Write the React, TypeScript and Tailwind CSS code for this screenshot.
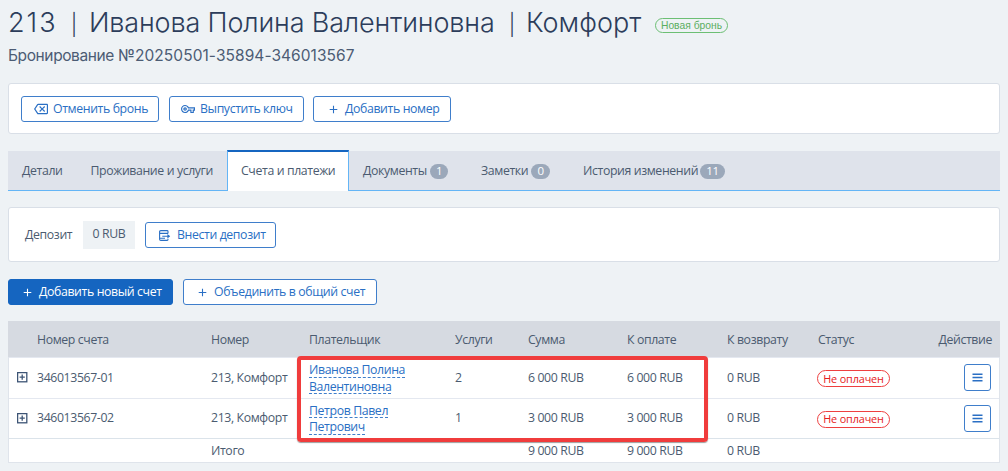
import React from "react";
import { MdAdd, MdOutlineBackspace, MdOutlineVpnKey } from "react-icons/md";

type Invoice = { id: string; payer: [string, string]; services: string; sum: string };

const invoices: Invoice[] = [
  { id: "346013567-01", payer: ["Иванова Полина", "Валентиновна"], services: "2", sum: "6 000 RUB" },
  { id: "346013567-02", payer: ["Петров Павел", "Петрович"], services: "1", sum: "3 000 RUB" },
];

const rowGrid = "grid grid-cols-[28px_174px_98px_146px_73px_99px_100px_91px_1fr] items-center";

function Button({ icon, children, className = "" }: { icon: React.ReactNode; children: React.ReactNode; className?: string }) {
  return (
    <button className={`flex h-[26px] shrink-0 items-center rounded-[3px] border border-[#3f7ecb] bg-white pt-px pl-[12px] text-[#2a6fc4] whitespace-nowrap ${className}`}>
      {icon}
      {children}
    </button>
  );
}

function Count({ children, className = "" }: { children: React.ReactNode; className?: string }) {
  return (
    <span className={`flex h-[15px] items-center justify-center rounded-full bg-[#9ba8ba] text-[11.5px] font-medium text-white ${className}`}>
      {children}
    </span>
  );
}

function DepositIcon() {
  return (
    <svg className="mr-[6px] h-[13px] w-[13px]" viewBox="0 0 13 13" fill="none" stroke="currentColor" strokeWidth="1.1">
      <path d="M10 4.6V2.4Q10 1.6 9.2 1.6H2.8Q1.6 1.6 1.6 2.8V10.2Q1.6 11.4 2.8 11.4H9.2Q10 11.4 10 10.6V9.8M1.6 4.4H10M4.3 7.3H11.2M1.6 9.2H7" />
      <path d="M9.4 5L12.2 7.3L9.4 9.6Z" fill="currentColor" stroke="none" />
    </svg>
  );
}

function ExpandIcon() {
  return (
    <svg className="ml-[8px] h-[11px] w-[11px] text-[#3d5475]" viewBox="0 0 11 11" fill="none" stroke="currentColor" strokeWidth="1.3">
      <rect x="0.6" y="0.6" width="9.2" height="9.2" />
      <path d="M5.2 2.6V7.8M2.6 5.2H7.8" />
    </svg>
  );
}

function MenuIcon() {
  return (
    <svg className="h-[9px] w-[11px]" viewBox="0 0 11 9" fill="none" stroke="currentColor" strokeWidth="1.4">
      <path d="M0.5 1.2H10.5M0.5 4.5H10.5M0.5 7.8H10.5" />
    </svg>
  );
}

export default function App() {
  return (
    <main className="h-[471px] w-[1008px] overflow-hidden bg-[#eef2f5] px-2 font-['Open_Sans','Noto_Sans',sans-serif] text-[12.3px] tracking-[-0.38px] text-[#4b5b70]">
      <header className="h-[83px] font-['Inter','Liberation_Sans',sans-serif] tracking-normal">
        <div className="flex h-[46px] items-center">
          <h1 className="flex w-[647px] items-center pt-px text-[27px] font-light whitespace-nowrap text-[#2c3d5b]">
            <span className="w-[61px] tracking-[2px]">213</span>
            <span className="mr-[10px] w-[10px] pt-[3px] text-center text-[21px]">|</span>
            <span className="w-[418px] tracking-[-0.15px]">Иванова Полина Валентиновна</span>
            <span className="mr-[9px] w-[10px] pt-[3px] text-center text-[21px]">|</span>
            <span>Комфорт</span>
          </h1>
          <span className="mt-[5px] flex h-[15px] w-[73px] items-center justify-center rounded-full border border-[#6cbf74] font-['Liberation_Sans',sans-serif] text-[10.3px] whitespace-nowrap text-[#5aae62]">Новая бронь</span>
        </div>
        <p className="mt-[-1px] flex text-[15.5px] leading-[22px] whitespace-nowrap text-[#4c5c74]">
          <span className="w-[110px] tracking-[-0.4px]">Бронирование</span>
          <span className="tracking-[0.06px]">№20250501-35894-346013567</span>
        </p>
      </header>

      <section className="flex h-[51px] w-[992px] items-center rounded-[3px] border border-[#d9dfe7] bg-white pl-[12px]">
        <Button className="mr-[10px] w-[138px]" icon={<MdOutlineBackspace className="mr-[5px] size-[14px]" />}>Отменить бронь</Button>
        <Button className="mr-[9px] w-[135px] !pl-[11px]" icon={<MdOutlineVpnKey className="mr-[5px] size-[14px]" />}>Выпустить ключ</Button>
        <Button className="w-[138px]" icon={<MdAdd className="mr-[5px] ml-px size-[13px]" />}>Добавить номер</Button>
      </section>

      <nav className="mt-4 flex h-[41px] w-[992px] items-end">
        <div className="flex h-[40px] w-[219px] items-center border-b border-[#64b5f6] bg-[#dfe3eb] pt-px pl-[14px]">
          <span className="w-[68.5px]">Детали</span>
          <span className="whitespace-nowrap">Проживание и услуги</span>
        </div>
        <div className="flex h-[41px] w-[122px] items-center border-x border-t-2 border-x-[#64b5f6] border-t-[#1565c0] bg-white pl-[13px] whitespace-nowrap">Счета и платежи</div>
        <div className="flex h-[40px] flex-1 items-center border-b border-[#64b5f6] bg-[#dfe3eb] pt-px pl-[14px] whitespace-nowrap">
          <div className="flex w-[118px] items-center justify-start">
            <span className="w-[67px]">Документы</span><Count className="w-[18px]">1</Count>
          </div>
          <div className="flex w-[102px] items-center">
            <span className="w-[50px]">Заметки</span><Count className="w-[19px]">0</Count>
          </div>
          <span className="w-[117px]">История изменений</span><Count className="w-[25px]">11</Count>
        </div>
      </nav>

      <section className="mt-4 flex h-[55px] w-[992px] items-center rounded-[3px] border border-[#d9dfe7] bg-white pl-[16px]">
        <span className="w-[58px] pt-px">Депозит</span>
        <span className="mr-[10px] flex h-[28px] w-[52px] items-center justify-center bg-[#eef2f5]">0 RUB</span>
        <Button className="w-[131px]" icon={<DepositIcon />}>Внести депозит</Button>
      </section>

      <div className="mt-[17px] flex gap-[10px]">
        <Button className="w-[165px] !border-[#1565c0] !bg-[#1565c0] !pt-0 font-medium !text-white" icon={<MdAdd className="mr-[5px] size-[13px]" />}>Добавить новый счет</Button>
        <Button className="w-[194px] !pt-0" icon={<MdAdd className="mr-[5px] size-[13px]" />}>Объединить в общий счет</Button>
      </div>

      <section className="relative mt-[16px] h-[142px] w-[992px] border border-[#dfe4eb] bg-white whitespace-nowrap">
        <div className={`${rowGrid} -mx-px -mt-px h-[36px] bg-[#d6dae1] pt-[2px] pl-px`}>
          <span /><span>Номер счета</span><span>Номер</span><span>Плательщик</span><span>Услуги</span><span>Сумма</span><span>К оплате</span><span>К возврату</span>
          <div className="flex justify-between pr-[8px]"><span>Статус</span><span>Действие</span></div>
        </div>
        {invoices.map((invoice) => (
          <div key={invoice.id} className={`${rowGrid} h-[40.5px] border-t border-[#e4e8f0]`}>
            <ExpandIcon />
            <span>{invoice.id}</span>
            <span>213, Комфорт</span>
            <div className="flex flex-col items-start gap-[1px] pt-px text-[#2a6fc4]">
              {invoice.payer.map((name) => (
                <span key={name} className="h-[15.5px] border-b border-dashed border-[#3f7ecb] leading-[15px]">{name}</span>
              ))}
            </div>
            <span>{invoice.services}</span>
            <span>{invoice.sum}</span>
            <span>{invoice.sum}</span>
            <span>0 RUB</span>
            <div className="flex items-center justify-between pr-[8px]">
              <span className="mt-[2px] -ml-px flex h-[17px] w-[73px] items-center justify-center rounded-full border border-[#ee4040] text-[10.8px] tracking-[-0.1px] text-[#e52020]">Не оплачен</span>
              <button className="flex size-[27px] items-center justify-center rounded-[3px] border border-[#3f7ecb] text-[#2a6fc4]"><MenuIcon /></button>
            </div>
          </div>
        ))}
        <div className={`${rowGrid} h-[24px] border-t border-[#dbe3ea] pt-px`}>
          <span /><span /><span>Итого</span><span /><span /><span>9 000 RUB</span><span>9 000 RUB</span><span>0 RUB</span><span />
        </div>
        <div className="pointer-events-none absolute top-[34px] left-[288px] h-[86px] w-[411px] rounded-[4px] border-4 border-[#f03c3c] shadow-[0_1px_1px_rgba(60,60,60,0.5)]" />
      </section>
    </main>
  );
}
